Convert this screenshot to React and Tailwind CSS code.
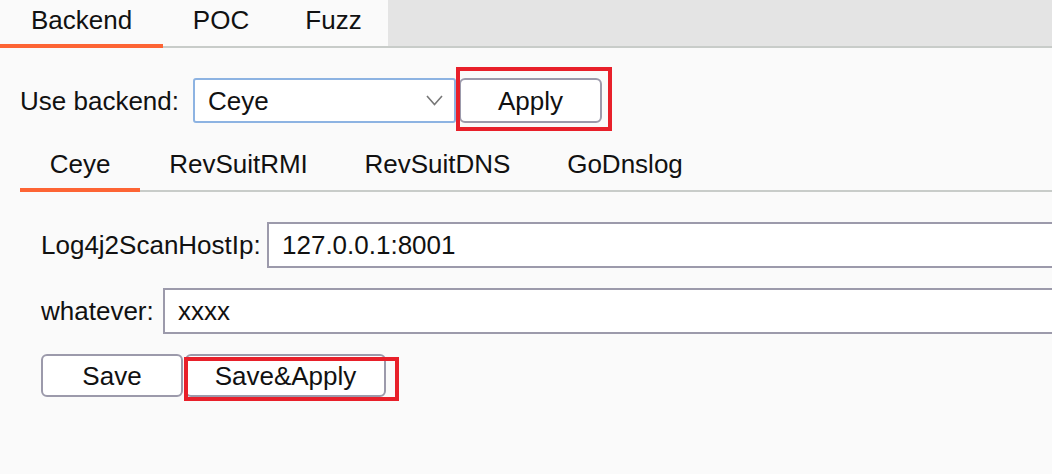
// App.jsx - Log4j2Scan 백엔드 설정 패널
import React, { useState } from 'react';

const topTabs = [
    { name: 'Backend', width: 'w-[163px]' },
    { name: 'POC', width: 'w-[116px]' },
    { name: 'Fuzz', width: 'w-[109px]' },
];

const backendTabs = [
    { name: 'Ceye', width: 'w-[120px]' },
    { name: 'RevSuitRMI', width: 'w-[197px]' },
    { name: 'RevSuitDNS', width: 'w-[201px]' },
    { name: 'GoDnslog', width: 'w-[174px]' },
];

const fields = [
    { label: 'Log4j2ScanHostIp:', value: '127.0.0.1:8001', labelWidth: 'w-[226px]' },
    { label: 'whatever:', value: 'xxxx', labelWidth: 'w-[122px]' },
];

// 빨간 강조 박스 (스크린샷 주석)
const RedMark = ({ className }) => (
    <span className={`pointer-events-none absolute border-4 border-[#e8202a] ${className}`} />
);

const App = () => {
    const [tab, setTab] = useState('Backend');
    const [backendTab, setBackendTab] = useState('Ceye');

    return (
        <div
            className="w-[1052px] h-[474px] overflow-hidden bg-[#fafafa] text-[26px] text-[#111]"
            style={{ fontFamily: '"Liberation Sans", Arial, sans-serif' }}
        >
            {/* 상단 탭 */}
            <div className="flex border-b-2 border-[#c8ccc9]">
                {topTabs.map((t) => (
                    <div
                        key={t.name}
                        onClick={() => setTab(t.name)}
                        className={`relative ${t.width} h-[46px] pt-[5px] leading-[30px] text-center cursor-default`}
                    >
                        {t.name}
                        {tab === t.name && (
                            <span className="absolute left-0 right-0 bottom-[-2px] h-[4px] bg-[#fd6434]" />
                        )}
                    </div>
                ))}
                <div className="flex-1 bg-[#e4e4e4]" />
            </div>

            {/* 백엔드 선택 */}
            <div className="flex items-center pl-[20px] pt-[30px]">
                <span className="w-[163px] shrink-0 leading-[30px] whitespace-nowrap">Use backend:</span>
                <div className="ml-[10px] flex items-center justify-between w-[263px] h-[45px] pl-[13px] pr-[11px] bg-white border-2 border-[#8db3e2] rounded-[3px]">
                    <span className="leading-[30px]">Ceye</span>
                    <svg width="17" height="11" viewBox="0 0 17 11" fill="none">
                        <polyline points="1,1 8.5,9.5 16,1" stroke="#777" strokeWidth="1.6" />
                    </svg>
                </div>
                <div className="relative ml-[3px]">
                    <button className="w-[143px] h-[45px] bg-white border-2 border-[#9c9aab] rounded-[6px] leading-[30px]">
                        Apply
                    </button>
                    <RedMark className="left-[-3px] right-[-10px] top-[-11px] bottom-[-8px]" />
                </div>
            </div>

            {/* 백엔드 탭 */}
            <div className="ml-[20px] mt-[19px] flex border-b-2 border-[#c8ccc9]">
                {backendTabs.map((t) => (
                    <div
                        key={t.name}
                        onClick={() => setBackendTab(t.name)}
                        className={`relative ${t.width} h-[48px] pt-[7px] leading-[30px] text-center cursor-default`}
                    >
                        {t.name}
                        {backendTab === t.name && (
                            <span className="absolute left-0 right-0 bottom-[-2px] h-[4px] bg-[#fd6434]" />
                        )}
                    </div>
                ))}
            </div>

            {/* 설정 폼 */}
            <div className="pl-[41px] pt-[30px] flex flex-col gap-[20px]">
                {fields.map((f) => (
                    <div key={f.label} className="flex items-center">
                        <span className={`${f.labelWidth} shrink-0 leading-[30px] whitespace-nowrap`}>{f.label}</span>
                        <div className="flex-1 h-[46px] flex items-center pl-[13px] bg-white border-2 border-r-0 border-[#9c9aab] leading-[30px]">
                            {f.value}
                        </div>
                    </div>
                ))}

                <div className="flex items-center gap-[2px]">
                    <button className="w-[142px] h-[43px] bg-white border-2 border-[#9c9aab] rounded-[6px] leading-[30px]">
                        Save
                    </button>
                    <div className="relative">
                        <button className="w-[201px] h-[43px] bg-white border-2 border-[#9c9aab] rounded-[6px] leading-[30px]">
                            Save&amp;Apply
                        </button>
                        <RedMark className="left-[-1px] right-[-13px] top-[3px] bottom-[-4px]" />
                    </div>
                </div>
            </div>
        </div>
    );
};

export default App;
